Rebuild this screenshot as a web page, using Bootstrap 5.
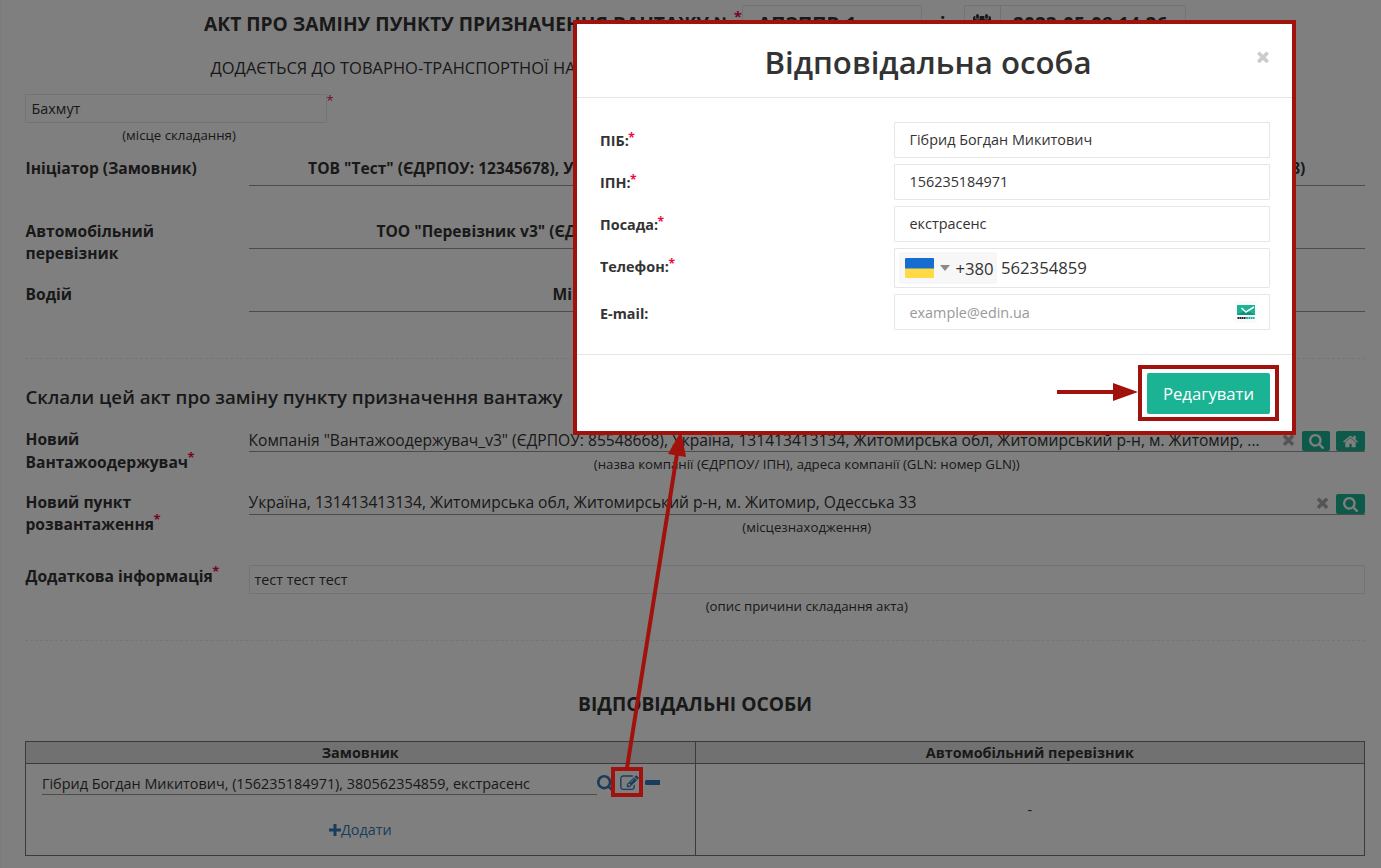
<!DOCTYPE html>
<html lang="uk">
<head>
<meta charset="utf-8">
<meta name="viewport" content="width=device-width, initial-scale=1">
<title>Відповідальна особа</title>
<link href="https://cdn.jsdelivr.net/npm/bootstrap@5.3.0/dist/css/bootstrap.min.css" rel="stylesheet">
<style>
  body { font-family: "Open Sans", "Noto Sans", sans-serif; font-size: 14.4px; line-height: 20px; color: #333; background: #fff; height: 868px; overflow: hidden; position: relative; }
  .doc { padding: 5px 16px 0 24px; border-left: 1px solid #f4f4f4; height: 868px; }
  .req { color: #ed0a3f; font-size: 13px; font-weight: 700; line-height: 0; position: relative; top: -6px; margin-left: -.5px; }
  .box { border: 1px solid #e5e6e7; border-radius: 1px; background: #fff; }
  .act-title { height: 38px; font-size: 19.2px; font-weight: 700; padding-left: 179px; white-space: nowrap; }
  .act-title .box { height: 38px; line-height: 36px; padding: 0 15px; }
  .act-title .req { top: -8px; font-size: 15px; margin: 0; }
  .num-box { width: 180px; }
  .act-and { width: 42px; }
  .cal-box { width: 36px; }
  .date-box { width: 184px; padding: 0 12px; }
  .act-sub { height: 51px; line-height: 50px; font-size: 16.5px; padding-left: 185.500px; white-space: nowrap; }
  .place { width: 302px; height: 29px; line-height: 28px; padding-left: 5.500px; }
  .place-hint { width: 308px; height: 34px; }
  .hint { font-size: 13.25px; line-height: 18px; padding-top: 3px; text-align: center; }
  .line-row { height: 63px; font-size: 15.6px; line-height: 22.5px; }
  .lab { font-weight: 700; flex: 0 0 223.5px; width: 223.5px; padding-left: .5px; }
  .under { border-bottom: 1px solid #999; white-space: nowrap; }
  .under-b { height: 29px; font-weight: 700; }
  .under-n { height: 24px; line-height: 24px; }
  .tall-row { height: 75px; }
  .carrier-lab { line-height: 22px; }
  .point-row { height: 74px; line-height: 22px; }
  .point-row .under-n > span:first-child { line-height: 22px; }
  .sep { border-top: 1px dashed #e7eaec; height: 0; }
  .sec { font-size: 18.7px; font-weight: 600; line-height: 24px; padding: 26px 0 0 .5px; height: 69px; }
  .persons-title { font-size: 19.2px; height: 100px; line-height: 126px; }
  .ibtn { height: 20px; background: #1ab394; border-radius: 2px; color: #fff; margin: 3px 0 0 8px; width: 29px; }
  .gx { color: #aaa; width: 11px; }
  .info-box { height: 29px; font-size: 14.4px; line-height: 28px; padding-left: 5px; }
  svg { display: block; fill: currentColor; }
  .ptab { border: 1px solid #777; height: 115px; }
  .ptab .pcell { flex: 1 1 0; }
  .ptab .pcell + .pcell { border-left: 1px solid #777; }
  .phead { height: 22px; line-height: 22px; background: #e3e3e3; font-weight: 700; text-align: center; border-bottom: 1px solid #777; }
  .person-row { padding: 9px 0 0 16px; }
  .person { width: 555px; height: 22px; line-height: 22px; border-bottom: 1px solid #999; white-space: nowrap; color: #333; }
  .blue { color: #337ab7; }
  .shade { position: absolute; inset: 0; background: rgba(0,0,0,.5); }
  .dlg { position: absolute; left: 573px; top: 20px; width: 723px; height: 415px; border: 4px solid #a1120d; background: #fff; }
  .dlg-head { height: 74px; border-bottom: 1px solid #e5e5e5; position: relative; }
  .dlg-head h4 { font-size: 31.2px; font-weight: 600; line-height: 76px; margin: 0; padding-right: 13px; height: 73px; }
  .dlg-x { position: absolute; right: 23px; top: 27px; width: 12px; height: 12px; color: #ccc; }
  .dlg-body { height: 257px; padding: 24px 22px 0 23px; border-bottom: 1px solid #e5e5e5; row-gap: 6px; }
  .dlg-body label { width: 294px; font-weight: 700; padding-top: 2px; }
  .dlg-body label.tel-lab { padding: 0 0 2px; }
  .dlg-body .req { top: -4px; font-size: 12px; }
  .fld { width: 376px; height: 36px; padding: 0 14.500px; line-height: 34px; }
  .fld-tel { height: 40px; padding: 4px; font-size: 16.7px; }
  .fld-mail { color: #999; line-height: 36px; }
  .tel-pre { width: 98px; height: 32px; background: #f7f7f7; border-radius: 3px; padding-left: 6px; }
  .tel-pre .code { padding-top: 2px; }
  .flag { width: 29px; height: 20px; border-radius: 1px; background: linear-gradient(#156dd1 0 10px, #ffda44 11px); }
  .caret { border: 5px solid transparent; border-top: 6px solid #8a8a8a; border-bottom: 0; margin: 0 5.500px 0 6px; }
  .mail-ico { width: 22px; height: 22px; margin: 6px -2px 0 0; background: #fafafa; }
  .btn-edit, .btn-edit:hover { width: 123px; height: 41px; padding: 1px 0 0; font-size: 16.7px; line-height: 40px; background: #1ab394; color: #fff; border: 0; border-radius: 2px; }
  .dlg-foot { padding: 18px 22px 0 0; }
  .marks { position: absolute; inset: 0; pointer-events: none; fill: none; stroke: #a1120d; stroke-width: 4; }
  .marks .tip { fill: #a1120d; stroke: none; }
</style>
</head>
<body>
<svg width="0" height="0" class="position-absolute">
  <symbol id="i-search" viewBox="0 128 1664 1664"><path d="M1152 832q0-185-131.500-316.500t-316.500-131.500-316.500 131.500-131.500 316.500 131.500 316.500 316.500 131.500 316.500-131.500 131.500-316.500zm512 832q0 52-38 90t-90 38q-54 0-90-38l-343-342q-179 124-399 124-143 0-273.500-55.500t-225-150-150-225-55.500-273.500 55.500-273.500 150-225 225-150 273.500-55.500 273.500 55.500 225 150 150 225 55.500 273.500q0 220-124 399l343 343q37 37 37 90z"/></symbol>
  <symbol id="i-times" viewBox="302 302 1188 1252"><path d="M1490 1322q0 40-28 68l-136 136q-28 28-68 28t-68-28l-294-294-294 294q-28 28-68 28t-68-28l-136-136q-28-28-28-68t28-68l294-294-294-294q-28-28-28-68t28-68l136-136q28-28 68-28t68 28l294 294 294-294q28-28 68-28t68 28l136 136q28 28 28 68t-28 68l-294 294 294 294q28 28 28 68z"/></symbol>
  <symbol id="i-home" viewBox="64 192 1664 1400"><path d="M1472 992v480q0 26-19 45t-45 19h-384v-384h-256v384h-384q-26 0-45-19t-19-45v-480q0-1 .5-3t.5-3l575-474 575 474q1 2 1 6zm223-69l-62 74q-8 9-21 11h-3q-13 0-21-7l-692-577-692 577q-12 8-24 7-13-2-21-11l-62-74q-8-10-7-23.500t11-21.500l719-599q32-26 76-26t76 26l244 204v-195q0-14 9-23t23-9h192q14 0 23 9t9 23v408l219 182q10 8 11 21.500t-7 23.500z"/></symbol>
  <symbol id="i-edit" viewBox="0 100 1792 1536"><path d="M888 1184l116-116-152-152-116 116v56h96v96h56zm440-720q-16-16-33 1l-350 350q-17 17-1 33t33-1l350-350q17-17 1-33zm80 594v190q0 119-84.500 203.500t-203.500 84.500h-832q-119 0-203.500-84.500t-84.500-203.500v-832q0-119 84.500-203.500t203.500-84.500h832q63 0 117 25 15 7 18 23 3 17-9 29l-49 49q-14 14-32 8-23-6-45-6h-832q-66 0-113 47t-47 113v832q0 66 47 113t113 47h832q66 0 113-47t47-113v-126q0-13 9-22l64-64q15-15 35-7t20 29zm-96-738l288 288-672 672h-288v-288zm444 132l-92 92-288-288 92-92q28-28 68-28t68 28l152 152q28 28 28 68t-28 68z"/></symbol>
</svg>

<main class="doc">
  <div class="act-title d-flex align-items-center">
    <span>АКТ ПРО ЗАМІНУ ПУНКТУ ПРИЗНАЧЕННЯ ВАНТАЖУ №</span><span class="req">*</span>
    <span class="box num-box">АПЗППВ-1</span>
    <span class="act-and text-center">від</span>
    <span class="box d-flex p-0"><span class="cal-box d-flex align-items-center justify-content-center border-end"><svg width="18" height="20" viewBox="0 0 18 20"><path d="M0 4q0-2 2-2h1V1.500q0-1.500 1.500-1.500t1.500 1.500V2h6v-.5q0-1.500 1.500-1.500t1.500 1.500V2h1q2 0 2 2v14q0 1-1 1H1q-1 0-1-1zm2 4v9h14V8z"/><path fill="none" stroke="#fff" stroke-width=".7" d="M2.700 1.500V5h3.600V1.500M11.700 1.500V5h3.600V1.500"/></svg></span><span class="date-box">2023-05-08 14:26</span></span>
  </div>
  <div class="act-sub">ДОДАЄТЬСЯ ДО ТОВАРНО-ТРАНСПОРТНОЇ НАКЛАДНОЇ</div>
  <div class="d-flex"><div class="box place">Бахмут</div><span class="req fw-normal" style="top:6px">*</span></div>
  <div class="hint place-hint">(місце складання)</div>

  <div class="d-flex line-row"><div class="lab">Ініціатор (Замовник)</div><div class="under under-b flex-grow-1 text-center">ТОВ "Тест" (ЄДРПОУ: 12345678), Україна, 01001, Київська обл, м. Київ, вул. Хрещатик, буд. 12, офіс 345, (GLN: 9864232596028)</div></div>
  <div class="d-flex line-row"><div class="lab carrier-lab">Автомобільний<br>перевізник</div><div class="under under-b flex-grow-1 text-center">ТОО "Перевізник v3" (ЄДРПОУ: 12345678), Україна, 01001, м. Київ, вул. Лісова, буд. 10, (GLN: 9864232596028)</div></div>
  <div class="d-flex line-row tall-row"><div class="lab">Водій</div><div class="under under-b flex-grow-1 text-center">Мірний Степан Олегович, (посвідчення водія: серія BCE 12345)</div></div>
  <div class="sep"></div>

  <h5 class="sec m-0">Склали цей акт про заміну пункту призначення вантажу</h5>
  <div class="d-flex line-row"><div class="lab">Новий<br>Вантажоодержувач<span class="req">*</span></div>
    <div class="flex-grow-1"><div class="under under-n d-flex"><span class="flex-grow-1">Компанія "Вантажоодержувач_v3" (ЄДРПОУ: 85548668), Україна, 131413413134, Житомирська обл, Житомирський р-н, м. Житомир, ...</span>
      <span class="gx d-flex align-items-center"><svg width="11" height="12"><use href="#i-times"/></svg></span>
      <span class="ibtn d-flex align-items-center justify-content-center" style="width:28px"><svg width="15" height="15"><use href="#i-search"/></svg></span>
      <span class="ibtn d-flex align-items-center justify-content-center" style="margin-left:6px"><svg width="15" height="13"><use href="#i-home"/></svg></span></div>
      <div class="hint">(назва компанії (ЄДРПОУ/ ІПН), адреса компанії (GLN: номер GLN))</div></div></div>
  <div class="d-flex line-row point-row"><div class="lab">Новий пункт<br>розвантаження<span class="req">*</span></div>
    <div class="flex-grow-1"><div class="under under-n d-flex"><span class="flex-grow-1">Україна, 131413413134, Житомирська обл, Житомирський р-н, м. Житомир, Одесська 33</span>
      <span class="gx d-flex align-items-center"><svg width="11" height="12"><use href="#i-times"/></svg></span>
      <span class="ibtn d-flex align-items-center justify-content-center"><svg width="15" height="15"><use href="#i-search"/></svg></span></div>
      <div class="hint">(місцезнаходження)</div></div></div>
  <div class="d-flex line-row tall-row"><div class="lab">Додаткова інформація<span class="req">*</span></div>
    <div class="flex-grow-1"><div class="box info-box">тест тест тест</div>
      <div class="hint">(опис причини складання акта)</div></div></div>
  <div class="sep"></div>

  <h5 class="persons-title m-0 text-center fw-bold">ВІДПОВІДАЛЬНІ ОСОБИ</h5>
  <div class="ptab d-flex">
    <div class="pcell"><div class="phead">Замовник</div>
      <div class="person-row d-flex blue"><div class="person">Гібрид Богдан Микитович, (156235184971), 380562354859, екстрасенс</div>
        <svg width="17" height="17" style="margin-top:2px"><use href="#i-search"/></svg>
        <svg width="19" height="16" style="margin:2px 0 0 6px"><use href="#i-edit"/></svg>
        <svg width="15.500" height="5" style="margin:7px 0 0 5.500px"><rect width="15.500" height="5" rx="1.500"/></svg></div>
      <div class="d-flex blue justify-content-center align-items-center" style="margin-top:25px"><svg width="12" height="12" viewBox="0 0 12 12"><path d="M4.500 0h3v4.500H12v3H7.500V12h-3V7.500H0v-3h4.500z"/></svg>Додати</div>
    </div>
    <div class="pcell"><div class="phead">Автомобільний перевізник</div><div class="text-center" style="padding-top:36px">-</div></div>
  </div>
</main>

<div class="shade"></div>

<section class="dlg">
  <div class="dlg-head"><h4 class="text-center">Відповідальна особа</h4>
    <svg class="dlg-x"><use href="#i-times"/></svg></div>
  <div class="dlg-body d-flex flex-column">
    <div class="d-flex align-items-center"><label>ПІБ:<span class="req">*</span></label><div class="box fld">Гібрид Богдан Микитович</div></div>
    <div class="d-flex align-items-center"><label>ІПН:<span class="req">*</span></label><div class="box fld">156235184971</div></div>
    <div class="d-flex align-items-center"><label>Посада:<span class="req">*</span></label><div class="box fld">екстрасенс</div></div>
    <div class="d-flex align-items-center"><label class="tel-lab">Телефон:<span class="req">*</span></label><div class="box fld fld-tel d-flex align-items-center"><span class="tel-pre d-flex align-items-center"><span class="flag"></span><span class="caret"></span><span class="code">+380</span></span><span class="ps-1">562354859</span></div></div>
    <div class="d-flex align-items-center"><label class="pt-1">E-mail:</label><div class="box fld fld-mail d-flex justify-content-between"><span>example@edin.ua</span>
      <svg class="mail-ico" viewBox="0 0 22 22"><path fill="#1ab394" d="M2 4h18v10H2z"/><path fill="#0f9479" d="M2 14l9-5 9 5z"/><path fill="none" stroke="#fff" stroke-width="1.500" d="M6.500 7l4.500 4 8-5"/><path stroke="#223" stroke-width="2" stroke-dasharray="1.600 .4" d="M2.500 17h9"/><path stroke="#1ab394" stroke-width="2" stroke-dasharray="1.600 .4" d="M11.500 17H20"/></svg></div></div>
  </div>
  <div class="dlg-foot d-flex justify-content-end"><button class="btn btn-edit">Редагувати</button></div>
</section>

<svg class="marks" width="1381" height="868" viewBox="0 0 1381 868">
  <rect x="1140" y="367" width="137" height="52"/>
  <path d="M1057 392h57"/><path class="tip" d="M1113 383l25 9-25 9z"/>
  <rect x="613" y="769" width="28" height="26"/>
  <path d="M627 768L677 454"/><path class="tip" d="M681 431l5 26-18-3z"/>
</svg>
<script src="https://cdn.jsdelivr.net/npm/bootstrap@5.3.0/dist/js/bootstrap.bundle.min.js"></script>
</body>
</html>
